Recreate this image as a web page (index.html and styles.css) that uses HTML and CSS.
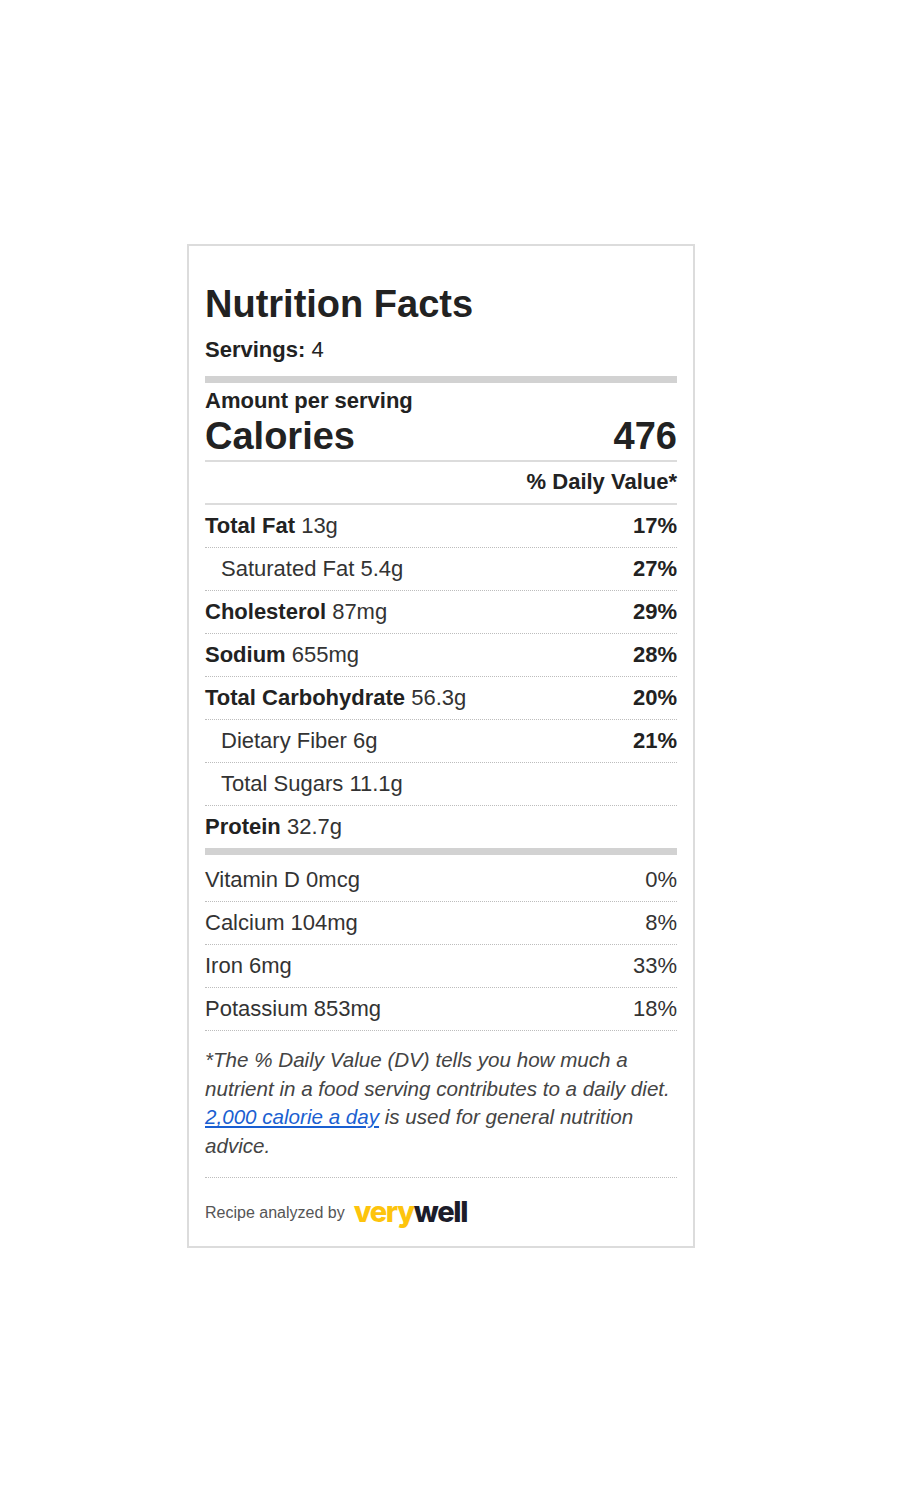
FILE: index.html
```html
<!DOCTYPE html>
<html lang="en">
<head>
<meta charset="utf-8">
<title>Nutrition Facts</title>
<link rel="stylesheet" href="styles.css">
</head>
<body>
<div class="page">
  <section class="label">
    <h1 class="title">Nutrition Facts</h1>
    <div class="servings"><b>Servings:</b> 4</div>
    <div class="bar"></div>
    <div class="amount">Amount per serving</div>
    <div class="calories"><span>Calories</span><span>476</span></div>
    <div class="dv-head">% Daily Value*</div>
    <div class="nutrients">
      <div class="row"><span><b>Total Fat</b> 13g</span><b>17%</b></div>
      <div class="row sub"><span>Saturated Fat 5.4g</span><b>27%</b></div>
      <div class="row"><span><b>Cholesterol</b> 87mg</span><b>29%</b></div>
      <div class="row"><span><b>Sodium</b> 655mg</span><b>28%</b></div>
      <div class="row"><span><b>Total Carbohydrate</b> 56.3g</span><b>20%</b></div>
      <div class="row sub"><span>Dietary Fiber 6g</span><b>21%</b></div>
      <div class="row sub"><span>Total Sugars 11.1g</span></div>
      <div class="row last"><span><b>Protein</b> 32.7g</span></div>
    </div>
    <div class="bar"></div>
    <div class="vitamins">
      <div class="row"><span>Vitamin D 0mcg</span><span>0%</span></div>
      <div class="row"><span>Calcium 104mg</span><span>8%</span></div>
      <div class="row"><span>Iron 6mg</span><span>33%</span></div>
      <div class="row"><span>Potassium 853mg</span><span>18%</span></div>
    </div>
    <p class="note">*The % Daily Value (DV) tells you how much a nutrient in a food serving contributes to a daily diet. <a href="#">2,000 calorie a day</a> is used for general nutrition advice.</p>
    <div class="footer">
      <span class="by">Recipe analyzed by</span>
      <span class="logo"><span class="very">very</span><span class="well">well</span></span>
    </div>
  </section>
</div>
</body>
</html>
```

FILE: styles.css
```css
* { box-sizing: border-box; }
body {
  margin: 0;
  background: #fff;
  font-family: "Liberation Sans", Arial, Helvetica, sans-serif;
  color: #333;
}
.page {
  padding: 244px 0 0 187px;
}
.label {
  width: 508px;
  border: 2px solid #dcdcdc;
  padding: 35.5px 16px 0 16px;
}
.title {
  margin: 0;
  font-size: 38px;
  line-height: 45px;
  font-weight: 700;
  color: #222;
}
.servings {
  margin-top: 10.5px;
  font-size: 22px;
  line-height: 26px;
  color: #222;
}
.bar {
  height: 7px;
  background: #d2d2d2;
}
.servings + .bar { margin-top: 12.5px; }
.amount {
  margin-top: 5.5px;
  font-size: 22px;
  line-height: 26px;
  font-weight: 700;
  color: #222;
}
.calories {
  display: flex;
  justify-content: space-between;
  font-size: 38px;
  line-height: 45px;
  font-weight: 700;
  color: #222;
  border-bottom: 2px solid #dcdcdc;
  padding-bottom: 1px;
}
.dv-head {
  text-align: right;
  font-size: 22px;
  line-height: 26px;
  font-weight: 700;
  color: #222;
  padding: 7px 0 7.5px;
  border-bottom: 2px solid #dcdcdc;
}
.row {
  display: flex;
  justify-content: space-between;
  font-size: 22px;
  line-height: 26px;
  padding: 8.5px 0 7.5px;
  border-bottom: 1px dotted #bdbdbd;
}
.row b { color: #222; }
.row.sub { padding-left: 16px; }
.row.last { border-bottom: 0; }
.vitamins { margin-top: 4px; }
.note {
  margin: 15.5px 0 0;
  font-size: 20.6px;
  line-height: 28.7px;
  font-style: italic;
  color: #444;
  padding-bottom: 16px;
  border-bottom: 1px dotted #bdbdbd;
}
.note a {
  color: #1a5fd1;
  text-decoration: underline;
}
.footer {
  height: 68px;
  display: flex;
  align-items: center;
  gap: 9px;
}
.by {
  font-size: 16px;
  color: #555;
  padding-top: 3px;
}
.logo {
  font-family: Inter, "Noto Sans", sans-serif;
  font-weight: 800;
  font-size: 29px;
  line-height: 1;
  letter-spacing: -1.3px;
}
.very { color: #fdc40d; }
.well { color: #1c1c2a; }
```
